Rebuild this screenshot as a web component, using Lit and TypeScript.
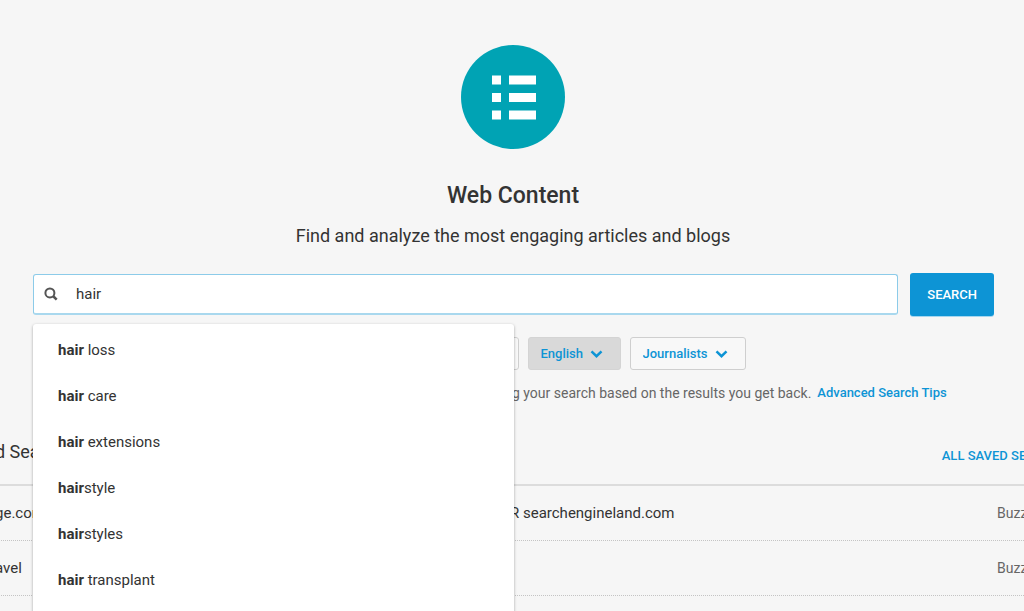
import { LitElement, html, css, svg } from "lit";
import { customElement, state } from "lit/decorators.js";

interface Suggestion {
  match: string;
  rest: string;
}

const SUGGESTIONS: Suggestion[] = [
  { match: "hair", rest: " loss" },
  { match: "hair", rest: " care" },
  { match: "hair", rest: " extensions" },
  { match: "hair", rest: "style" },
  { match: "hair", rest: "styles" },
  { match: "hair", rest: " transplant" },
];

const SAVED = [
  { start: "ge.com", end: "R searchengineland.com", owner: "Buzz" },
  { start: "avel", end: "", owner: "Buzz" },
];

const chevron = svg`<path d="M1.500 2.400 L6.500 7.200 L11.500 2.400" fill="none" stroke="currentColor" stroke-width="2.500"/>`;

@customElement("app-root")
export class AppRoot extends LitElement {
  @state() private query = "hair";

  static styles = css`
    :host {
      display: block;
      height: 100vh;
      overflow: hidden;
      background: #f6f6f6;
      color: #333;
      font-family: Roboto, "Liberation Sans", sans-serif;
      font-size: 15px;
      line-height: 20px;
    }
    * {
      box-sizing: border-box;
    }
    .hero {
      display: flex;
      flex-direction: column;
      align-items: center;
      padding: 45px 31px 0 33px;
    }
    .logo {
      display: block;
      width: 104px;
      height: 104px;
    }
    h1 {
      margin: 31px 0 0;
      font-size: 23px;
      line-height: 32px;
      font-weight: 500;
    }
    .tagline {
      margin: 12px 0 0;
      font-size: 18px;
      line-height: 24px;
    }
    .search {
      display: flex;
      align-items: flex-start;
      gap: 12px;
      padding: 25px 30px 0 33px;
    }
    .field {
      position: relative;
      flex: 1;
      display: flex;
      align-items: center;
      height: 41px;
      margin-top: 1px;
      padding-left: 10px;
      gap: 18px;
      background: #fff;
      border: 1px solid #8ccbe9;
      border-bottom: 2px solid #a9d8ee;
      border-radius: 3px;
    }
    .glass {
      flex: none;
      width: 14px;
      height: 14px;
      color: #555;
    }
    .query {
      flex: 1;
      min-width: 0;
      padding: 0;
      border: 0;
      outline: 0;
      background: none;
      color: #333;
      font: inherit;
      line-height: 20px;
    }
    .submit {
      height: 43px;
      padding: 0 17px;
      border: 0;
      border-radius: 3px;
      background: #0d94d5;
      box-shadow: 0 1px 0 #a5d6ef;
      color: #fff;
      font: inherit;
      font-size: 13px;
      font-weight: 500;
    }
    .suggestions {
      position: absolute;
      z-index: 1;
      top: calc(100% + 11px);
      left: -1px;
      width: calc((100% + 98px) / 2);
      height: 100vh;
      margin: 0;
      padding: 3px 0;
      list-style: none;
      background: #fff;
      border-radius: 3px;
      box-shadow: 0 1px 3px rgba(0, 0, 0, 0.35);
    }
    .suggestion {
      padding: 13px 25px;
      line-height: 20px;
    }
    .suggestion b {
      font-weight: 700;
    }
    .filters {
      display: flex;
      justify-content: center;
      gap: 9px;
      padding: 21px 31px 0 33px;
    }
    .filter {
      display: grid;
      align-items: center;
      color: #0d94d5;
    }
    .filter select {
      grid-area: 1 / 1;
      appearance: none;
      height: 33px;
      padding: 0 36px 0 12px;
      border: 1px solid #cfcfcf;
      border-radius: 3px;
      background: #f8f8f8;
      color: inherit;
      font: inherit;
      font-size: 13px;
      font-weight: 500;
    }
    .filter .active {
      background: #d9d9d9;
      border-color: #d4d4d4;
    }
    .filter svg {
      grid-area: 1 / 1;
      justify-self: end;
      width: 13px;
      height: 10px;
      margin-right: 18px;
      pointer-events: none;
    }
    .date {
      width: 238px;
    }
    .help {
      display: flex;
      gap: 6px;
      margin: 0;
      padding: 13px 30px 0 50%;
      font-size: 14px;
      color: #666;
    }
    a {
      color: #0d94d5;
      font-size: 13px;
      font-weight: 500;
      text-decoration: none;
      white-space: nowrap;
    }
    .saved {
      margin: 38px -52px 0 -5px;
      white-space: nowrap;
    }
    .saved-head {
      display: flex;
      justify-content: space-between;
      align-items: flex-end;
      height: 45px;
      padding-bottom: 18px;
      border-bottom: 2px solid #dcdcdc;
    }
    h2 {
      margin: 0;
      font-size: 18px;
      line-height: 28px;
      font-weight: 400;
    }
    .row {
      display: grid;
      grid-template-columns: 515px 1fr auto;
      align-items: center;
      height: 55px;
      border-bottom: 1px dotted #c4c4c4;
    }
    .owner {
      width: 79px;
      font-size: 14px;
      color: #666;
    }
  `;

  render() {
    return html`
      <header class="hero">
        <svg class="logo" viewBox="0 0 104 104" aria-hidden="true">
          <circle cx="52" cy="52" r="52" fill="#00a3b4" />
          <path
            fill="#fff"
            d="M31 30.500h9v9h-9zM48 30.500h27v9h-27zM31 48h9v9h-9zM48 48h27v9h-27zM31 65.500h9v9h-9zM48 65.500h27v9h-27z"
          />
        </svg>
        <h1>Web Content</h1>
        <p class="tagline">Find and analyze the most engaging articles and blogs</p>
      </header>

      <form class="search" @submit=${(e: Event) => e.preventDefault()}>
        <div class="field">
          <svg class="glass" viewBox="0 0 14 14" aria-hidden="true">
            <circle cx="5.900" cy="5.900" r="4.500" fill="none" stroke="currentColor" stroke-width="2" />
            <path d="M9 9l3.700 3.700" stroke="currentColor" stroke-width="2.500" />
          </svg>
          <input
            class="query"
            type="text"
            aria-label="Search"
            .value=${this.query}
            @input=${(e: Event) => (this.query = (e.target as HTMLInputElement).value)}
          />
          <ul class="suggestions">
            ${SUGGESTIONS.map((s) => html`<li class="suggestion"><b>${s.match}</b>${s.rest}</li>`)}
          </ul>
        </div>
        <button class="submit" type="submit">SEARCH</button>
      </form>

      <div class="filters">
        <label class="filter date">
          <select aria-label="Date"></select>
        </label>
        <label class="filter">
          <select class="active" aria-label="Language">
            <option>English</option>
          </select>
          <svg viewBox="0 0 13 10" aria-hidden="true">${chevron}</svg>
        </label>
        <label class="filter">
          <select aria-label="Author type">
            <option>Journalists</option>
          </select>
          <svg viewBox="0 0 13 10" aria-hidden="true">${chevron}</svg>
        </label>
      </div>

      <p class="help">
        <span>g your search based on the results you get back.</span>
        <a href="#tips">Advanced Search Tips</a>
      </p>

      <section class="saved">
        <div class="saved-head">
          <h2>d Sea</h2>
          <a href="#saved">ALL SAVED SEARCHES</a>
        </div>
        ${SAVED.map(
          (r) => html`<div class="row">
            <span>${r.start}</span><span>${r.end}</span><span class="owner">${r.owner}</span>
          </div>`
        )}
      </section>
    `;
  }
}
